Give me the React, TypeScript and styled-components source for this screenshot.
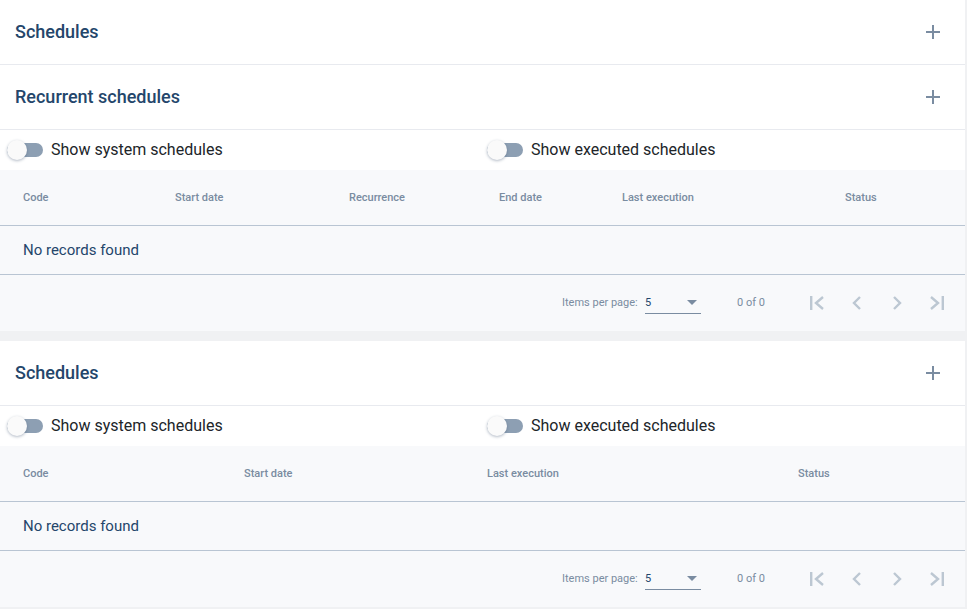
import React from "react";
import styled, {createGlobalStyle} from "styled-components";

const GlobalStyle = createGlobalStyle`
  html, body {
    margin: 0;
    padding: 0;
    background: #f0f1f3;
    font-family: Roboto, "Liberation Sans", sans-serif;
  }
`

const Page = styled.div`
  width: 965px;
`

const Panel = styled.section`
  background: #ffffff;
`

const SecondPanel = styled(Panel)`
  margin-top: 10px;
`

const PanelHeader = styled.div`
  height: 64px;
  display: flex;
  align-items: center;
  justify-content: space-between;
  padding: 0 24px 0 15px;
  border-bottom: 1px solid #e8eaef;
`

const PanelTitle = styled.h2`
  margin: 0 0 2px;
  font-size: 18px;
  font-weight: 500;
  color: #24466b;
`

const AddButton = styled.button`
  width: 16px;
  height: 16px;
  padding: 0;
  border: 0;
  background: none;
  display: flex;
  color: #7a8ca1;
`

const ToggleRow = styled.div`
  height: 40px;
  display: flex;
  align-items: center;
`

const ToggleLabel = styled.label`
  width: 480px;
  display: flex;
  align-items: center;
  gap: 8px;
  padding-left: 7px;
  box-sizing: border-box;
  font-size: 16px;
  color: #212529;
`

const ToggleText = styled.span`
  padding-bottom: 2px;
`

const ToggleTrack = styled.span`
  position: relative;
  width: 36px;
  height: 14px;
  border-radius: 7px;
  background: #8d9fb3;
`

const ToggleKnob = styled.span`
  position: absolute;
  left: 0;
  top: -3px;
  width: 20px;
  height: 20px;
  border-radius: 50%;
  background: #fafafa;
  box-shadow: 0 1px 3px rgba(60, 80, 110, 0.4);
`

const Table = styled.div`
  background: #f8f9fb;
`

const HeaderRow = styled.div<{$columns: string}>`
  height: 55px;
  display: grid;
  grid-template-columns: ${(p) => p.$columns};
  align-items: center;
  padding-left: 23px;
  border-bottom: 1px solid #b9c5d3;
  font-size: 11px;
  font-weight: 500;
  color: #7a8ca1;
`

const EmptyRow = styled.div`
  height: 48px;
  display: flex;
  align-items: center;
  padding-left: 23px;
  border-bottom: 1px solid #b9c5d3;
  font-size: 15px;
  color: #24466b;
`

const Paginator = styled.div`
  height: 56px;
  display: flex;
  align-items: center;
  padding-left: 562px;
  font-size: 11px;
  color: #7a8ca1;
`

const PageSizeLabel = styled.span`
  width: 83px;
  padding-bottom: 1px;
`

const PageSize = styled.div`
  width: 56px;
  height: 22px;
  box-sizing: border-box;
  display: flex;
  align-items: center;
  justify-content: space-between;
  padding-right: 4px;
  border-bottom: 1px solid #7a8ca1;
  color: #24466b;
`

const Caret = styled.span`
  width: 0;
  height: 0;
  border-left: 5px solid transparent;
  border-right: 5px solid transparent;
  border-top: 5px solid #7a8ca1;
`

const RangeLabel = styled.span`
  width: 72px;
  margin-left: 36px;
  padding-bottom: 1px;
`

const PagerButtons = styled.div`
  display: flex;
  gap: 24px;
  color: #bcc7d2;
`

const Icon = styled.svg`
  display: block;
  width: 16px;
  height: 16px;
  fill: none;
  stroke: currentColor;
  stroke-width: 2.4;
`

const PlusIcon = styled(Icon)`
  stroke-width: 2;
`

const PLUS = "M8 1v14M1 8h14"
const FIRST = "M2.2 1v14M14 2L7 8l7 6"
const PREV = "M11 2L5 8l6 6"
const NEXT = "M5 2l6 6-6 6"
const LAST = "M13.8 1v14M2 2l7 6-7 6"

const Toggle = ({label}: {label: string}) => (
  <ToggleLabel>
    <ToggleTrack><ToggleKnob/></ToggleTrack>
    <ToggleText>{label}</ToggleText>
  </ToggleLabel>
)

const Header = ({title}: {title: string}) => (
  <PanelHeader>
    <PanelTitle>{title}</PanelTitle>
    <AddButton aria-label="Add">
      <PlusIcon viewBox="0 0 16 16"><path d={PLUS}/></PlusIcon>
    </AddButton>
  </PanelHeader>
)

type ScheduleTableProps = {
  columns: string,
  labels: string[],
}

const ScheduleTable = ({columns, labels}: ScheduleTableProps) => (
  <>
    <ToggleRow>
      <Toggle label="Show system schedules"/>
      <Toggle label="Show executed schedules"/>
    </ToggleRow>
    <Table>
      <HeaderRow $columns={columns}>
        {labels.map((label) => <span key={label}>{label}</span>)}
      </HeaderRow>
      <EmptyRow>No records found</EmptyRow>
      <Paginator>
        <PageSizeLabel>Items per page:</PageSizeLabel>
        <PageSize>5<Caret/></PageSize>
        <RangeLabel>0 of 0</RangeLabel>
        <PagerButtons>
          {[FIRST, PREV, NEXT, LAST].map((d) => (
            <Icon key={d} viewBox="0 0 16 16"><path d={d}/></Icon>
          ))}
        </PagerButtons>
      </Paginator>
    </Table>
  </>
)

const App = () => (
  <Page>
    <GlobalStyle/>
    <Panel>
      <Header title="Schedules"/>
      <Header title="Recurrent schedules"/>
      <ScheduleTable
        columns="152px 174px 150px 123px 223px 1fr"
        labels={["Code", "Start date", "Recurrence", "End date", "Last execution", "Status"]}/>
    </Panel>
    <SecondPanel>
      <Header title="Schedules"/>
      <ScheduleTable
        columns="221px 243px 311px 1fr"
        labels={["Code", "Start date", "Last execution", "Status"]}/>
    </SecondPanel>
  </Page>
)

export default App
